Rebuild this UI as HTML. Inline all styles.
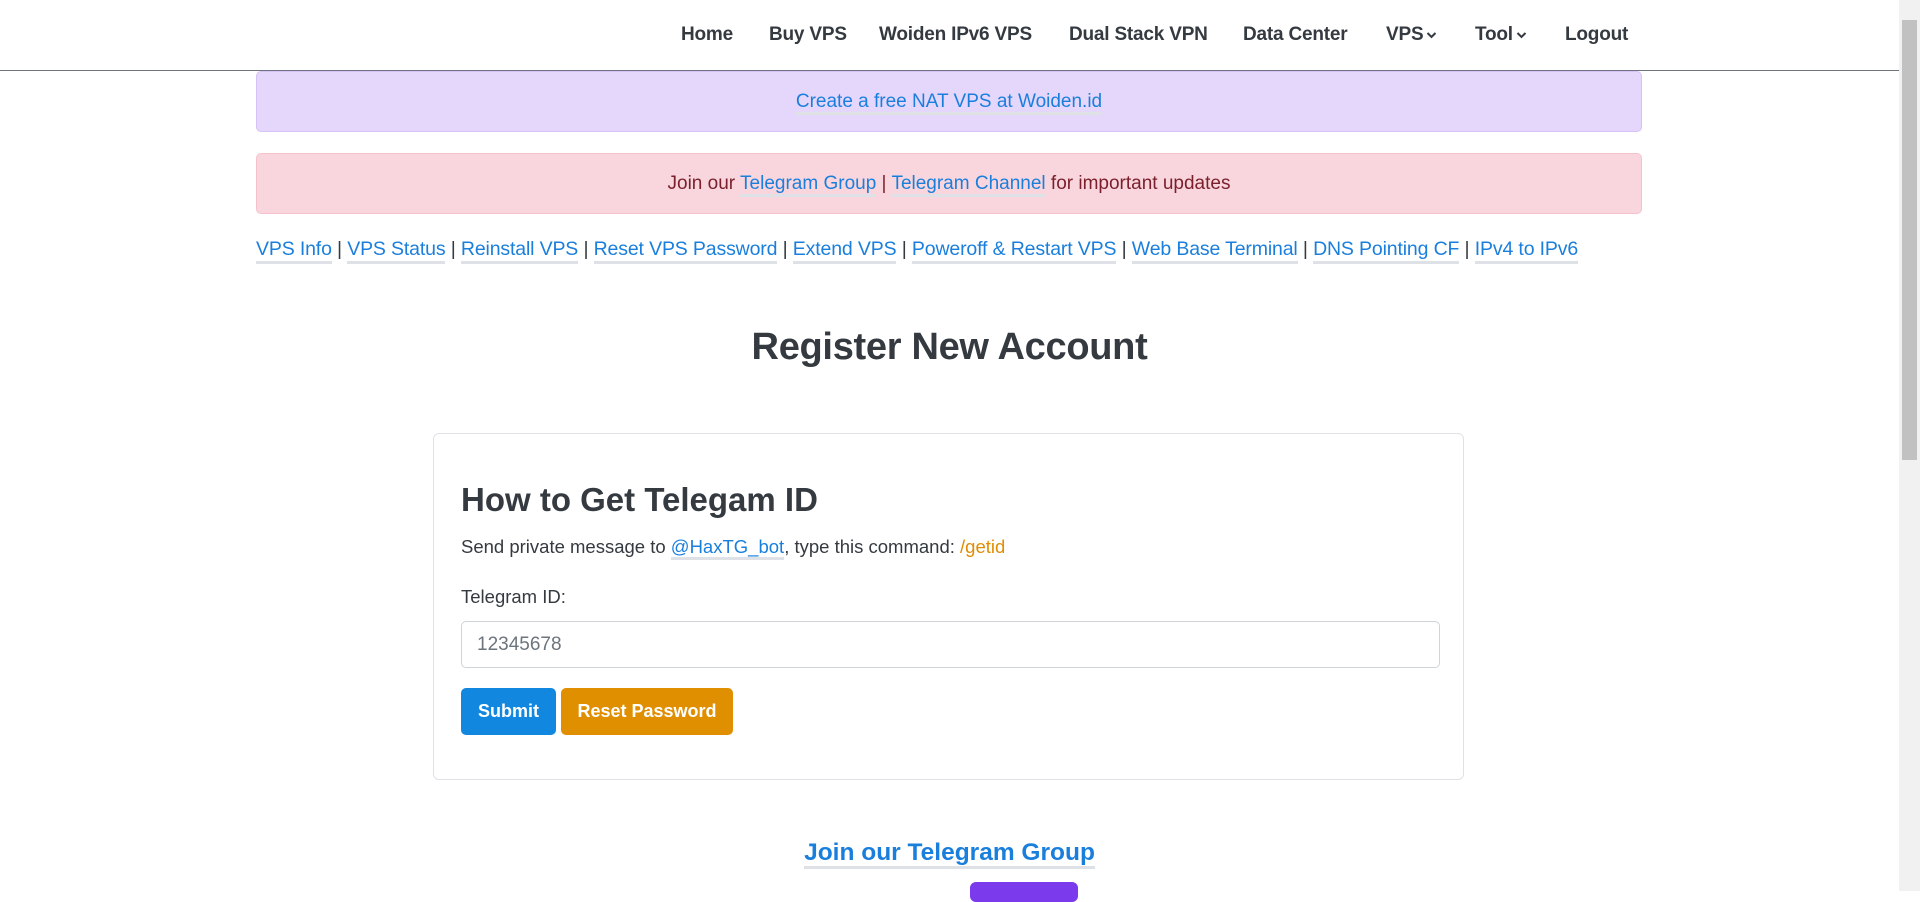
<!DOCTYPE html>
<html><head><meta charset="utf-8"><style>
*{box-sizing:border-box;margin:0;padding:0}
html,body{width:1920px;height:891px;overflow:hidden;background:#fff;font-family:"Liberation Sans",sans-serif;color:#343a40}
#page{position:absolute;left:0;top:0;width:1899px;height:891px}
#sb{position:absolute;left:1899px;top:0;width:21px;height:891px;background:#f1f1f1}
#sb div{position:absolute;left:3px;top:20px;width:15px;height:440px;background:#c1c1c1}
nav{height:71px;border-bottom:1.5px solid #6c757d;position:relative}
nav a{position:absolute;top:24px;font-size:19px;font-weight:bold;color:#343a40;text-decoration:none;white-space:nowrap;letter-spacing:-0.2px}
nav svg{vertical-align:middle;margin-left:3px}
a{color:#1a7fdc;text-decoration:none}
.alert{position:absolute;left:256px;width:1386px;height:61px;border-radius:5px;text-align:center;line-height:59px;font-size:19px}
.u{border-bottom:3px solid #dee2e6}
.links{position:absolute;left:256px;top:238px;font-size:19.5px;white-space:nowrap;color:#343a40;letter-spacing:-0.15px}
.links a{border-bottom:3px solid #dee2e6;padding-bottom:1px}
h1{position:absolute;left:0;width:1899px;top:326px;text-align:center;font-size:38px;font-weight:bold;letter-spacing:-0.3px}
.card{position:absolute;left:433px;top:433px;width:1031px;height:347px;border:1px solid #dee2e6;border-radius:6px}
.card h2{position:absolute;left:27px;top:47px;font-size:33px;font-weight:bold;white-space:nowrap}
.card p{position:absolute;left:27px;top:102px;font-size:18.5px;white-space:nowrap}
.card label{position:absolute;left:27px;top:152px;font-size:18.5px}
.inp{position:absolute;left:27px;top:187px;width:979px;height:47px;border:1px solid #ced4da;border-radius:5px;padding-left:15px;line-height:45px;font-size:19px;color:#6c757d}
.btn{position:absolute;top:254px;height:47px;border-radius:5px;color:#fff;font-weight:bold;font-size:18px;text-align:center;line-height:47px}
</style></head><body><div id="page">
<nav>
<a style="left:681px">Home</a>
<a style="left:769px">Buy VPS</a>
<a style="left:879px">Woiden IPv6 VPS</a>
<a style="left:1069px">Dual Stack VPN</a>
<a style="left:1243px">Data Center</a>
<a style="left:1386px">VPS<svg width="11" height="8" viewBox="0 0 11 8"><path d="M1.5 2l4 4 4-4" fill="none" stroke="#343a40" stroke-width="2"/></svg></a>
<a style="left:1475px">Tool<svg width="11" height="8" viewBox="0 0 11 8"><path d="M1.5 2l4 4 4-4" fill="none" stroke="#343a40" stroke-width="2"/></svg></a>
<a style="left:1565px">Logout</a>
</nav>
<div class="alert" style="top:71px;background:#e5d6fb;border:1px solid #d6c2f7"><a class="u">Create a free NAT VPS at Woiden.id</a></div>
<div class="alert" style="top:153px;background:#f9d6dd;border:1px solid #f5c2cc;color:#7a1f2b">Join our <a class="u">Telegram Group</a> | <a class="u">Telegram Channel</a> for important updates</div>
<div class="links"><a>VPS Info</a> | <a>VPS Status</a> | <a>Reinstall VPS</a> | <a>Reset VPS Password</a> | <a>Extend VPS</a> | <a>Poweroff &amp; Restart VPS</a> | <a>Web Base Terminal</a> | <a>DNS Pointing CF</a> | <a>IPv4 to IPv6</a></div>
<h1>Register New Account</h1>
<div class="card">
<h2>How to Get Telegam ID</h2>
<p>Send private message to <a class="u">@HaxTG_bot</a>, type this command: <span style="color:#e08d00">/getid</span></p>
<label>Telegram ID:</label>
<div class="inp">12345678</div>
<div class="btn" style="left:27px;width:95px;background:#1287e0">Submit</div>
<div class="btn" style="left:127px;width:172px;background:#e08f00">Reset Password</div>
</div>
<div style="position:absolute;left:0;width:1899px;top:839px;text-align:center;font-size:24.5px;font-weight:bold"><a class="u">Join our Telegram Group</a></div>
<div style="position:absolute;left:970px;top:882px;width:108px;height:20px;background:#7c3aed;border-radius:6px"></div>
</div><div id="sb"><div></div></div></body></html>
